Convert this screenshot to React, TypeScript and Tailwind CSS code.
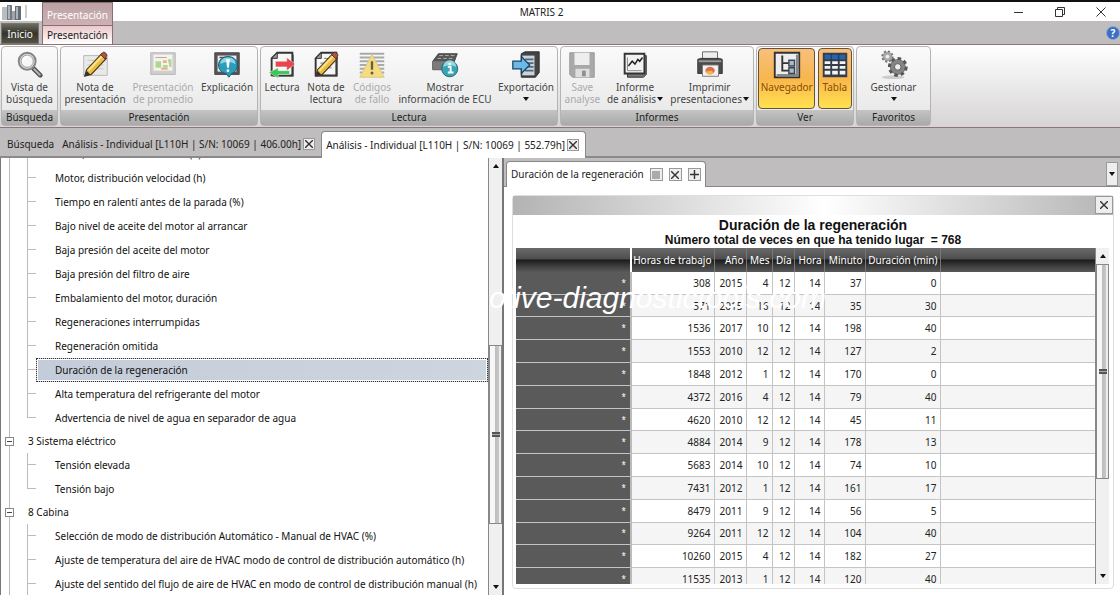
import clsx from 'clsx'
import type { ReactNode } from 'react'

type TreeItem = { label: string; level: 'group' | 'item'; selected?: boolean; last?: boolean }

const tree: TreeItem[] = [
  { label: 'Motor, distribución esfuerzo (h)', level: 'item' },
  { label: 'Motor, distribución velocidad (h)', level: 'item' },
  { label: 'Tiempo en ralentí antes de la parada (%)', level: 'item' },
  { label: 'Bajo nivel de aceite del motor al arrancar', level: 'item' },
  { label: 'Baja presión del aceite del motor', level: 'item' },
  { label: 'Baja presión del filtro de aire', level: 'item' },
  { label: 'Embalamiento del motor, duración', level: 'item' },
  { label: 'Regeneraciones interrumpidas', level: 'item' },
  { label: 'Regeneración omitida', level: 'item' },
  { label: 'Duración de la regeneración', level: 'item', selected: true },
  { label: 'Alta temperatura del refrigerante del motor', level: 'item' },
  { label: 'Advertencia de nivel de agua en separador de agua', level: 'item', last: true },
  { label: '3 Sistema eléctrico', level: 'group' },
  { label: 'Tensión elevada', level: 'item' },
  { label: 'Tensión bajo', level: 'item', last: true },
  { label: '8 Cabina', level: 'group' },
  { label: 'Selección de modo de distribución Automático - Manual de HVAC (%)', level: 'item' },
  { label: 'Ajuste de temperatura del aire de HVAC modo de control de distribución automático (h)', level: 'item' },
  { label: 'Ajuste del sentido del flujo de aire de HVAC en modo de control de distribución manual (h)', level: 'item' },
]

const columns = ['Horas de trabajo', 'Año', 'Mes', 'Día', 'Hora', 'Minuto', 'Duración (min)']

const rows = [
  [308, 2015, 4, 12, 14, 37, 0],
  [571, 2015, 16, 12, 14, 35, 30],
  [1536, 2017, 10, 12, 14, 198, 40],
  [1553, 2010, 12, 12, 14, 127, 2],
  [1848, 2012, 1, 12, 14, 170, 0],
  [4372, 2016, 4, 12, 14, 79, 40],
  [4620, 2010, 12, 12, 14, 45, 11],
  [4884, 2014, 9, 12, 14, 178, 13],
  [5683, 2014, 10, 12, 14, 74, 10],
  [7431, 2012, 1, 12, 14, 161, 17],
  [8479, 2011, 9, 12, 14, 56, 5],
  [9264, 2011, 12, 12, 14, 104, 40],
  [10260, 2015, 4, 12, 14, 182, 27],
  [11535, 2013, 1, 12, 14, 120, 40],
]

/* ---------- icons ---------- */

const Icon = ({ children }: { children: ReactNode }) => (
  <svg className="h-8 w-8 shrink-0" viewBox="-1 -1 34 34" fill="none" aria-hidden="true">
    {children}
  </svg>
)

const SearchIcon = () => (
  <Icon>
    <path d="M20 20l7 7" stroke="#555" strokeWidth="5" strokeLinecap="round" />
    <path d="M20 20l7 7" stroke="#b5b5b5" strokeWidth="2" />
    <circle cx="13" cy="12" r="9" fill="#ddd" stroke="#858585" strokeWidth="2" />
    <circle cx="13" cy="12" r="6.5" fill="#f6f6f6" stroke="#999" />
    <path d="M9 12a5 5 0 0 1 5-5" stroke="#fff" strokeWidth="2" />
  </Icon>
)

const Pencil = () => (
  <>
    <path d="M5 28l2-7L23 4l5 5-16 17z" fill="#eebc3e" stroke="#4c3c20" strokeWidth="1.2" />
    <path d="M9 22L24 6" stroke="#fbe494" strokeWidth="2" />
    <path d="M22 5l2-2c2-2 6 2 4 4l-1 3z" fill="#a6564a" stroke="#5d2d25" />
    <path d="M5 28l2-6 4 4z" fill="#333" />
  </>
)

const NoteIcon = () => (
  <Icon>
    <path d="M4 6h25v21H4z" fill="#e9e9e9" stroke="#b5b5b5" />
    <path d="M8 11h8M8 16h17M8 20h17" stroke="#b8d0a8" />
    <Pencil />
  </Icon>
)

const AverageIcon = () => (
  <Icon>
    <path d="M3 3h26v23H3z" fill="#cfcfcf" stroke="#b5b5b5" />
    <path d="M6 5h20v17H6z" fill="#f4f4ee" />
    <path d="M8 8h12" stroke="#c49a9a" />
    <path d="M8 12h6v7H8zM16 16h5v3h-5zM21 10h4v8h-2z" fill="#b0d78f" />
    <path d="M16 11h4v3h-4zM14 19h7v2h-7z" fill="#ecb087" />
  </Icon>
)

const ExplainIcon = () => (
  <Icon>
    <path d="M3 3h26v23H3z" fill="#555" stroke="#444" />
    <path d="M6 6h20v17H6z" fill="#eee" />
    <path d="M8 8h10" stroke="#8a3838" strokeWidth="1.5" />
    <path d="M17 7c6 0 10 4 10 9s-3 8-6 9l-3 4-3-4c-5-1-8-4-8-9s4-9 10-9z" fill="#2b9cba" stroke="#195b74" />
    <path d="M17 8c5 0 8 3 8 7-5-3-11-3-16 0 0-4 3-7 8-7z" fill="#8ed6e8" />
    <path d="M15 10h4l-1 9h-2z" fill="#fff" />
    <circle cx="17" cy="22" r="1.5" fill="#fff" />
  </Icon>
)

const Sheet = () => (
  <>
    <path d="M11 3h16v24H5V9z" fill="#f6f6f6" stroke="#333" strokeWidth="2" />
    <path d="M11 3v6H5z" fill="#999" stroke="#333" />
    <path d="M28 5v23H6" stroke="#555" />
  </>
)

const ReadingIcon = () => (
  <Icon>
    <Sheet />
    <path d="M9 12h12V8l9 7-9 7v-4H9z" fill="#e6464c" stroke="#fff" strokeWidth=".5" />
    <path d="M24 22H12v-3l-10 5 10 6v-4h12z" fill="#3fc55a" stroke="#eaffea" strokeWidth=".5" />
  </Icon>
)

const ReadingNoteIcon = () => (
  <Icon>
    <Sheet />
    <path d="M14 9h9M10 14h13M10 19h12" stroke="#777" />
    <Pencil />
  </Icon>
)

const CodesIcon = () => (
  <Icon>
    <path d="M3 4h26M3 8h26M3 12h26M3 16h26M3 20h26M3 24h26" stroke="#a9a9a9" strokeWidth="2" />
    <path d="M16 5l13 24H3z" fill="#f3dc84" stroke="#dcc97c" strokeLinejoin="round" />
    <path d="M16 12v9" stroke="#696038" strokeWidth="2.5" />
    <circle cx="16" cy="24.5" r="1.6" fill="#696038" />
  </Icon>
)

const EcuIcon = () => (
  <Icon>
    <path d="M3 12l6-8h20l-3 8v9H3z" fill="#555" stroke="#444" />
    <path d="M3 12h23v9H3z" fill="#7b7b7b" />
    <path d="M10 6h17M8 9h18" stroke="#b5b5b5" strokeDasharray="4 2" />
    <circle cx="21" cy="20" r="8.5" fill="#38a4b5" stroke="#27606c" />
    <path d="M14 18a7 7 0 0 1 14 0c-5-2-9-2-14 0z" fill="#94d9df" />
    <path d="M19 18h3v6M19 24h6" stroke="#fff" strokeWidth="2" />
    <circle cx="21" cy="15" r="1.5" fill="#fff" />
  </Icon>
)

const ExportIcon = () => (
  <Icon>
    <path d="M11 4l4-2h15v22l-4 5H11z" fill="#444" stroke="#2b2b2b" />
    <path d="M12 6h13v21H12z" fill="#c9d5de" />
    <path d="M15 10h9M15 14h9M15 18h9M15 22h9" stroke="#536879" strokeWidth="2" />
    <path d="M2 12h9V7l9 9-9 9v-5H2z" fill="#6ab9ea" stroke="#18415e" strokeWidth="1.3" />
  </Icon>
)

const SaveIcon = () => (
  <Icon>
    <path d="M3 3h26v26H6l-3-3z" fill="#a9a9a9" stroke="#999" />
    <path d="M8 3h16v13H8z" fill="#eee" />
    <path d="M9 20h15v9H9z" fill="#dedede" />
    <path d="M16 22h4v6h-4z" fill="#909090" />
  </Icon>
)

const ReportIcon = () => (
  <Icon>
    <path d="M8 8l20-2v20l-3 3H8z" fill="#777" stroke="#333" />
    <path d="M5 4h21v21H5z" fill="#f2f2f2" stroke="#333" strokeWidth="2" />
    <path d="M8 8v14h15" stroke="#888" />
    <path d="M9 17l4-5 3 3 3-5 2 2 3-4" stroke="#222" strokeWidth="1.6" />
  </Icon>
)

const PrintIcon = () => (
  <Icon>
    <path d="M8 2h16v10H8z" fill="#eee" stroke="#666" />
    <path d="M3 10l3-1h20l3 1v15H3z" fill="#4c4c4c" stroke="#333" />
    <path d="M4 12h24" stroke="#9c9c9c" strokeWidth="2" />
    <path d="M8 16h17v12H8z" fill="#f3f3f3" stroke="#777" />
    <path d="M11 23c0-6 8-7 10-2 1 4-7 7-10 2z" fill="#db704d" />
    <path d="M11 23l7-1 2 3c-4 2-7 2-9-2z" fill="#efb850" />
  </Icon>
)

const NavigatorIcon = () => (
  <Icon>
    <path d="M3 3h26v26H3z" fill="#eee" stroke="#333" strokeWidth="2" />
    <path d="M27 5v22H5" stroke="#888" strokeWidth="3" />
    <path d="M11 6v16h7M11 14h7" stroke="#333" strokeWidth="2" />
    <path d="M18 11h6v6h-6zM18 19h6v6h-6z" fill="#a9bbcb" stroke="#3b4650" strokeWidth="1.5" />
  </Icon>
)

const TableIcon = () => (
  <Icon>
    <path d="M3 3h26v26H3z" fill="#343d48" />
    <path d="M5 5h22v5H5z" fill="#2863a9" />
    <path d="M5 12h6v3H5zM5 17h6v3H5zM5 22h6v4H5zM13 12h6v3h-6zM13 17h6v3h-6zM13 22h6v4h-6zM21 12h6v3h-6zM21 17h6v3h-6zM21 22h6v4h-6z" fill="#f4f4f4" />
    <path d="M12 4v7M20 4v7" stroke="#12345f" />
  </Icon>
)

const GearsIcon = () => (
  <Icon>
    <circle cx="9" cy="7" r="5" fill="#999" stroke="#777" strokeWidth="3" strokeDasharray="2.1 1.8" />
    <circle cx="9" cy="7" r="4.5" fill="#aaa" />
    <circle cx="9" cy="7" r="2" fill="#eee" />
    <ellipse cx="15" cy="29" rx="12" ry="2" fill="#ccc" />
    <circle cx="20" cy="18" r="8.5" fill="#777" stroke="#555" strokeWidth="4" strokeDasharray="3.6 3" />
    <circle cx="20" cy="18" r="7.5" fill="#858585" />
    <circle cx="20" cy="18" r="3.5" fill="#eee" stroke="#555" />
  </Icon>
)

const AppLogo = () => (
  <svg className="h-[18px] w-[26px]" viewBox="0 0 26 18" aria-hidden="true">
    <path d="M1 5h5v13H1z" fill="#b8bdc2" />
    <path d="M6 3h5v15H6z" fill="#74797e" />
    <path d="M11 9h4v9h-4z" fill="#9ea5aa" />
    <path d="M14 4h6v14h-6z" fill="#656b72" />
    <path d="M7 4h2v13H7zM15 5h2v12h-2z" fill="#a9b5bf" />
    <path d="M25 3v13" stroke="#999" />
  </svg>
)

const Arrow = ({ up }: { up?: boolean }) => (
  <svg className="h-1 w-1.5 shrink-0" viewBox="0 0 6 4" aria-hidden="true">
    <path d={up ? 'M0 4h6L3 0z' : 'M0 0h6L3 4z'} fill="#111" />
  </svg>
)

/* ---------- ribbon ---------- */

type RibbonButtonProps = {
  icon: ReactNode
  lines: string[]
  width: string
  disabled?: boolean
  active?: boolean
  menu?: 'inline' | 'below'
}

const RibbonButton = ({ icon, lines, width, disabled, active, menu }: RibbonButtonProps) => (
  <button
    type="button"
    disabled={disabled}
    className={clsx(
      'flex h-[61px] shrink-0 flex-col items-center rounded-sm border text-[10px] leading-3 whitespace-nowrap',
      width,
      disabled ? 'text-[#aaa]' : active ? 'text-[#8a4a08]' : 'text-[#444]',
      active ? 'border-[#65543a] bg-linear-to-b from-[#f6bf7c] via-[#f9b64c] to-[#ffe14f]' : 'border-transparent',
    )}
  >
    {icon}
    {lines.map((line, i) => (
      <span key={line} className="flex items-center gap-px">
        {line}
        {menu === 'inline' && i === lines.length - 1 && <Arrow />}
      </span>
    ))}
    {menu === 'below' && <span className="pt-1"><Arrow /></span>}
  </button>
)

const RibbonGroup = ({ title, width, children }: { title: string; width: string; children: ReactNode }) => (
  <section className={clsx('flex shrink-0 flex-col rounded-sm border border-[#b4b4b4] bg-linear-to-b from-[#fafafa] to-[#e6e6e6]', width)}>
    <div className="flex flex-1 justify-around pt-px">{children}</div>
    <h2 className="h-[15px] bg-linear-to-b from-[#c4c4c4] to-[#a9a9a9] text-center text-[10px] leading-[15px] text-[#222]">{title}</h2>
  </section>
)

const Ribbon = () => (
  <div className="flex h-[84px] shrink-0 gap-0.5 border-y border-[#8c7478] bg-linear-to-b from-white to-[#d6d4d4] p-px">
    <RibbonGroup title="Búsqueda" width="w-[57px]">
      <RibbonButton icon={<SearchIcon />} lines={['Vista de', 'búsqueda']} width="w-[54px]" />
    </RibbonGroup>
    <RibbonGroup title="Presentación" width="w-[198px]">
      <RibbonButton icon={<NoteIcon />} lines={['Nota de', 'presentación']} width="w-[66px]" />
      <RibbonButton icon={<AverageIcon />} lines={['Presentación', 'de promedio']} width="w-[66px]" disabled />
      <RibbonButton icon={<ExplainIcon />} lines={['Explicación']} width="w-[58px]" />
    </RibbonGroup>
    <RibbonGroup title="Lectura" width="w-[298px]">
      <RibbonButton icon={<ReadingIcon />} lines={['Lectura']} width="w-[40px]" />
      <RibbonButton icon={<ReadingNoteIcon />} lines={['Nota de', 'lectura']} width="w-[44px]" />
      <RibbonButton icon={<CodesIcon />} lines={['Códigos', 'de fallo']} width="w-[44px]" disabled />
      <RibbonButton icon={<EcuIcon />} lines={['Mostrar', 'información de ECU']} width="w-[98px]" />
      <RibbonButton icon={<ExportIcon />} lines={['Exportación']} width="w-[60px]" menu="below" />
    </RibbonGroup>
    <RibbonGroup title="Informes" width="w-[194px]">
      <RibbonButton icon={<SaveIcon />} lines={['Save', 'analyse']} width="w-[40px]" disabled />
      <RibbonButton icon={<ReportIcon />} lines={['Informe', 'de análisis']} width="w-[60px]" menu="inline" />
      <RibbonButton icon={<PrintIcon />} lines={['Imprimir', 'presentaciones']} width="w-[84px]" menu="inline" />
    </RibbonGroup>
    <RibbonGroup title="Ver" width="w-[98px]">
      <RibbonButton icon={<NavigatorIcon />} lines={['Navegador']} width="w-[57px]" active />
      <RibbonButton icon={<TableIcon />} lines={['Tabla']} width="w-[34px]" active />
    </RibbonGroup>
    <RibbonGroup title="Favoritos" width="w-[75px]">
      <RibbonButton icon={<GearsIcon />} lines={['Gestionar']} width="w-[60px]" menu="below" />
    </RibbonGroup>
  </div>
)

const SmallButton = ({ label, children, className }: { label: string; children: ReactNode; className?: string }) => (
  <button
    type="button"
    aria-label={label}
    className={clsx('flex shrink-0 items-center justify-center border border-[#999] bg-[#eee]', className)}
  >
    {children}
  </button>
)

const Cross = () => (
  <svg className="h-2 w-2" viewBox="0 0 8 8" aria-hidden="true">
    <path d="M0 0l8 8M8 0L0 8" stroke="#333" strokeWidth="1.4" />
  </svg>
)

/* ---------- panels ---------- */

const Header = () => (
  <header className="grid h-[42px] shrink-0 grid-cols-[115px_1fr_152px] bg-[linear-gradient(#fff_19px,#bfbdbd_19px)]">
    <div className="flex gap-[3px]">
      <div className="flex w-[39px] flex-col justify-between pl-px">
        <AppLogo />
        <button type="button" className="h-[21px] border border-[#77776a] bg-linear-to-b from-[#6c6c60] via-[#34342c] to-[#55554a] text-[10px] leading-none text-white">
          Inicio
        </button>
      </div>
      <div className="flex w-[71px] flex-col border-x border-t border-[#8c6d70] text-center text-[10px]">
        <span className="h-[22px] bg-linear-to-b from-[#bba2a4] to-[#cdb1b3] pt-1 leading-4 text-white">Presentación</span>
        <button type="button" className="flex-1 border-t border-[#8c6d70] bg-linear-to-b from-[#eac9ca] to-white leading-4 text-[#222]">Presentación</button>
      </div>
    </div>
    <h1 className="h-[19px] text-center text-[10px] leading-5 text-[#222]">MATRIS 2</h1>
    <div className="flex flex-col items-end justify-between">
      <div className="flex h-[19px] items-center gap-[31px] pr-3.5">
        <button type="button" aria-label="Minimizar">
          <svg className="h-2.5 w-2.5" viewBox="0 0 10 10"><path d="M0 5.5h9" stroke="#333" /></svg>
        </button>
        <button type="button" aria-label="Restaurar">
          <svg className="h-2.5 w-2.5" viewBox="0 0 10 10" fill="none"><path d="M.5 2.5h7v7h-7zM2.5 2.5v-2h7v7h-2" stroke="#333" /></svg>
        </button>
        <button type="button" aria-label="Cerrar">
          <svg className="h-2.5 w-2.5" viewBox="0 0 10 10"><path d="M.5.5l9 9M9.5.5l-9 9" stroke="#333" /></svg>
        </button>
      </div>
      <button type="button" aria-label="Ayuda" className="mb-1 h-3.5 w-3.5 rounded-full border border-[#8ba6d4] bg-[#3b6fc4] text-[10px] leading-3 font-bold text-white">?</button>
    </div>
  </header>
)

const DocumentTabs = () => (
  <nav className="flex h-[30px] shrink-0 items-end border-b-2 border-[#8a8a8a] bg-[#bfbdbd] text-[10px] text-[#222]">
    <button type="button" className="h-6 pr-2 pl-[7px]">Búsqueda</button>
    <div className="flex h-6 items-center gap-0.5 pr-1.5">
      <button type="button" className="whitespace-nowrap">Análisis - Individual [L110H | S/N: 10069 | 406.00h]</button>
      <SmallButton label="Cerrar pestaña" className="h-3 w-3"><Cross /></SmallButton>
    </div>
    <div className="-mb-0.5 flex h-[27px] items-center gap-0.5 rounded-t-sm border-x border-t border-[#8a8a8a] bg-white pr-1.5 pl-1">
      <button type="button" className="whitespace-nowrap">Análisis - Individual [L110H | S/N: 10069 | 552.79h]</button>
      <SmallButton label="Cerrar pestaña" className="h-3 w-3"><Cross /></SmallButton>
    </div>
  </nav>
)

const TreeRow = ({ label, level, selected, last }: TreeItem) => {
  if (level === 'group') {
    return (
      <li className="flex h-[23px] items-center">
        <span className="flex w-[17px] shrink-0 flex-col items-center self-stretch">
          <span className="w-px flex-1 bg-[#bbb]" />
          <button type="button" aria-label="Contraer" className="flex h-[9px] w-[9px] items-center justify-center border border-[#888] bg-white">
            <span className="h-px w-[5px] bg-[#444]" />
          </button>
          <span className="w-px flex-1 bg-[#bbb]" />
        </span>
        <span className="pl-2.5">{label}</span>
      </li>
    )
  }
  return (
    <li className="flex h-6 items-stretch">
      <span className="w-[9px] shrink-0 border-r border-[#bbb]" />
      <span className="w-[17px] shrink-0" />
      <span className="flex w-[9px] shrink-0 flex-col">
        <span className="h-3 border-b border-l border-[#bbb]" />
        <span className={clsx('flex-1', !last && 'border-l border-[#bbb]')} />
      </span>
      <span
        className={clsx(
          'flex flex-1 items-center border pl-[18px] whitespace-nowrap',
          selected
            ? 'border-dotted border-[#333] bg-linear-to-r from-[#c3ccd8] to-[#cdd5df] inset-ring-1 inset-ring-white'
            : 'border-transparent',
        )}
      >
        {label}
      </span>
    </li>
  )
}

const ScrollBar = ({ before, thumb }: { before: string; thumb: string }) => (
  <div className="flex w-[14px] shrink-0 flex-col items-stretch border-l border-[#888] bg-[#f0f0f0]">
    <button type="button" aria-label="Subir" className="flex h-4 shrink-0 items-center justify-center"><Arrow up /></button>
    <div className={clsx('shrink-0', before)} />
    <div className={clsx('flex shrink-0 flex-col items-center justify-center border border-[#888] bg-[linear-gradient(90deg,#f7f7f7_45%,#bdbdbd_50%,#c9c9c9_85%,#eee_86%)]', thumb)}>
      <span className="h-[5px] w-2 border-y-2 border-[#555] bg-[#aaa]" />
    </div>
    <div className="flex-1" />
    <button type="button" aria-label="Bajar" className="flex h-4 shrink-0 items-center justify-center"><Arrow /></button>
  </div>
)

const Navigator = () => (
  <aside className="flex w-[504px] shrink-0 border-r-2 border-l border-[#777] bg-white">
    <div className="flex-1 overflow-hidden">
      <ul className="-mt-4 text-[10px] text-[#111]">
        {tree.map((item) => <TreeRow key={item.label} {...item} />)}
      </ul>
    </div>
    <ScrollBar before="h-[171px]" thumb="h-[179px]" />
  </aside>
)

const headCell = 'border-r border-[#777] pr-0.5 text-right font-normal whitespace-nowrap'

const RegenerationTable = () => (
  <table className="h-[343px] w-full table-fixed border-collapse text-[10px] leading-4 text-[#222]">
    <colgroup>
      <col className="w-[115px]" />
      <col className="w-[83px]" />
      <col className="w-8" />
      <col className="w-[26px]" />
      <col className="w-[22px]" />
      <col className="w-[30px]" />
      <col className="w-[41px]" />
      <col className="w-[75px]" />
      <col />
    </colgroup>
    <thead>
      <tr className="h-6 bg-[linear-gradient(#6a6a6a,#4e4e4e_45%,#1c1c1c_50%,#3d3d3d_75%,#585858)] text-white">
        <th className="border-r-2 border-white" aria-label="Marca" />
        {columns.map((name) => <th key={name} scope="col" className={headCell}>{name}</th>)}
        <td />
      </tr>
    </thead>
    <tbody>
      {rows.map((row) => (
        <tr key={row[0]} className="border-b border-[#c4c4c4] even:bg-[#f5f5f5]">
          <th scope="row" className="border-r-2 border-[#bbb] bg-[#5a5a5a] pr-1 text-right text-[8px] font-normal text-white">*</th>
          {row.map((value, i) => (
            <td key={columns[i]} className="border-r border-[#c4c4c4] pr-[3px] text-right">{value}</td>
          ))}
          <td />
        </tr>
      ))}
    </tbody>
  </table>
)

const Workspace = () => (
  <main className="flex min-w-0 flex-1 flex-col bg-white">
    <div className="flex h-[29px] shrink-0 items-end justify-between border-b border-[#888] bg-[#bfbdbd] pl-0.5">
      <div className="-mb-px flex h-[26px] items-center gap-1.5 rounded-t-sm border-x border-t border-[#888] bg-white px-1 text-[10px] text-[#222]">
        <button type="button" className="whitespace-nowrap">Duración de la regeneración</button>
        <SmallButton label="Ventana" className="h-[13px] w-[13px]"><span className="h-2 w-2 bg-[#aaa]" /></SmallButton>
        <SmallButton label="Cerrar" className="h-[13px] w-[13px]"><Cross /></SmallButton>
        <SmallButton label="Añadir" className="h-[13px] w-[13px]">
          <svg className="h-[9px] w-[9px]" viewBox="0 0 9 9"><path d="M4.5 0v9M0 4.5h9" stroke="#333" strokeWidth="1.4" /></svg>
        </SmallButton>
      </div>
      <SmallButton label="Lista de pestañas" className="mr-0.5 h-6 w-3"><Arrow /></SmallButton>
    </div>
    <div className="flex min-h-0 flex-1 flex-col pt-2 pr-1.5 pb-1.5 pl-2">
      <section className="flex min-h-0 flex-1 flex-col rounded-sm border border-[#ddd]">
        <div className="flex h-[19px] shrink-0 justify-end bg-[linear-gradient(90deg,#b3b3b3,#fff_52%,#b5b5b5)]">
          <SmallButton label="Cerrar presentación" className="h-[18px] w-[18px]"><Cross /></SmallButton>
        </div>
        <div className="shrink-0 pt-0.5 text-center font-['Liberation_Sans',sans-serif] font-bold text-[#111]">
          <h2 className="text-[14px] leading-4">Duración de la regeneración</h2>
          <p className="text-[12px] leading-[15px] whitespace-pre">Número total de veces en que ha tenido lugar  = 768</p>
        </div>
        <div className="flex min-h-0 flex-1 pr-1 pb-1 pl-[3px]">
          <div className="flex-1 overflow-hidden">
            <RegenerationTable />
          </div>
          <ScrollBar before="h-0" thumb="h-[215px]" />
        </div>
      </section>
    </div>
  </main>
)

const App = () => (
  <div className="relative flex h-screen flex-col overflow-hidden border-t-2 border-[#111] bg-white font-['Noto_Sans','Open_Sans',sans-serif]">
    <Header />
    <Ribbon />
    <DocumentTabs />
    <div className="flex min-h-0 flex-1">
      <Navigator />
      <Workspace />
    </div>
    <p className="pointer-events-none absolute inset-x-0 top-[280px] pl-10 text-center font-['Liberation_Sans',sans-serif] text-[30px] leading-8 text-white italic">
      www.automotive-diagnostictools.com
    </p>
  </div>
)

export default App
